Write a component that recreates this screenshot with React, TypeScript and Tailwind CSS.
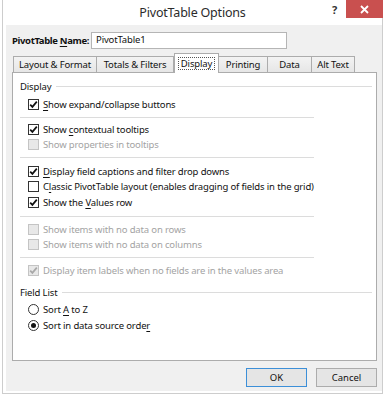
import type { ReactNode } from "react";

const font = { fontFamily: '"Noto Sans", "Open Sans", Arial, sans-serif' };

function Check({ checked, disabled }: { checked?: boolean; disabled?: boolean }) {
  return (
    <span
      className={`flex h-[11px] w-[11px] shrink-0 items-center justify-center border ${
        disabled ? "border-[#c4c4c4] bg-[#e8e8e8]" : "border-[#333] bg-white"
      }`}
    >
      {checked && (
        <svg width="9" height="9" viewBox="0 0 9 9">
          <path
            d="M1.2 4.6 L3.4 6.9 L7.8 1.6"
            fill="none"
            stroke={disabled ? "#a8a8a8" : "#111"}
            strokeWidth="1.7"
          />
        </svg>
      )}
    </span>
  );
}

function CheckRow({
  children,
  checked,
  disabled,
  className = "",
}: {
  children: ReactNode;
  checked?: boolean;
  disabled?: boolean;
  className?: string;
}) {
  return (
    <div className={`flex h-[15px] items-center gap-[4px] pl-[15px] ${className}`}>
      <Check checked={checked} disabled={disabled} />
      <span
        className={`whitespace-nowrap text-[9.5px] leading-none tracking-[-0.15px] ${
          disabled ? "text-[#a3a3a3]" : "text-[#111]"
        }`}
      >
        {children}
      </span>
    </div>
  );
}

function Radio({ checked, children, className = "" }: { checked?: boolean; children: ReactNode; className?: string }) {
  return (
    <div className={`flex h-[15px] items-center gap-[4px] pl-[15px] ${className}`}>
      <span className="flex h-[11px] w-[11px] shrink-0 items-center justify-center rounded-full border border-[#333] bg-white">
        {checked && <span className="h-[5px] w-[5px] rounded-full bg-[#111]" />}
      </span>
      <span className="whitespace-nowrap text-[9.5px] leading-none tracking-[-0.15px] text-[#111]">{children}</span>
    </div>
  );
}

function Sep({ className = "" }: { className?: string }) {
  return <div className={`ml-[7px] h-px w-[294px] bg-[#dcdcdc] ${className}`} />;
}

function Header({ label, className = "" }: { label: string; className?: string }) {
  return (
    <div className={`flex h-[15px] items-center gap-[5px] pl-[7px] pr-[4px] ${className}`}>
      <span className="whitespace-nowrap text-[9.5px] leading-none tracking-[-0.15px] text-[#111]">{label}</span>
      <div className="h-px flex-1 bg-[#dcdcdc]" />
    </div>
  );
}

const U = ({ children }: { children: ReactNode }) => <span className="underline underline-offset-2">{children}</span>;

const tabs = [
  { label: "Layout & Format", w: "w-[84px]" },
  { label: "Totals & Filters", w: "w-[78px]" },
  { label: "Display", w: "w-[45px]", active: true },
  { label: "Printing", w: "w-[50px]" },
  { label: "Data", w: "w-[45px]" },
  { label: "Alt Text", w: "w-[44px]" },
];

export default function App() {
  return (
    <div className="h-[400px] w-[388px] overflow-hidden bg-white" style={font}>
      <div className="relative ml-[2px] flex h-[394px] w-[381px] flex-col border-x border-b border-[#cdcdcd] bg-white">
        {/* Title bar */}
        <div className="flex h-[25px] shrink-0 items-center justify-center pt-[2px]">
          <span className="text-[12.5px] tracking-[-0.2px] text-[#2b2b2b]">PivotTable Options</span>
        </div>
        <span className="absolute left-[329px] top-[2px] text-[11px] font-bold text-[#333]">?</span>
        <div className="absolute right-[-1px] top-0 flex h-[18px] w-[37px] items-center justify-center bg-[#c9504f]">
          <svg width="9" height="9" viewBox="0 0 9 9">
            <path d="M1 1 L8 8 M8 1 L1 8" stroke="#fff" strokeWidth="1.8" />
          </svg>
        </div>

        {/* Client area */}
        <div className="mb-[2px] ml-[3px] flex flex-1 flex-col bg-[#f0f0f0] pl-[6px] pr-[3px] pt-[7px]">
          <div className="flex h-[17px] items-center gap-[2px]">
            <span className="shrink-0 whitespace-nowrap text-[9.5px] font-bold leading-none tracking-[-0.35px] text-[#111]">
              PivotTable <U>N</U>ame:
            </span>
            <div className="flex h-[17px] w-[196px] items-center border border-[#b5b5b5] bg-white pl-[4px] text-[9.5px] tracking-[-0.15px] text-[#111]">
              PivotTable1
            </div>
          </div>

          {/* Tabs */}
          <div className="mt-[4px] flex h-[19px] items-end pl-[2px]">
            {tabs.map((t) =>
              t.active ? (
                <div
                  key={t.label}
                  className={`relative z-10 -mb-px flex h-[20px] ${t.w} items-center justify-center border border-b-0 border-[#acacac] bg-white`}
                >
                  <span className="border border-dotted border-[#555] px-[2px] text-[9.5px] leading-[11px] tracking-[-0.15px] text-[#111]">
                    {t.label}
                  </span>
                </div>
              ) : (
                <div
                  key={t.label}
                  className={`-ml-px flex h-[16px] ${t.w} items-center justify-center whitespace-nowrap border border-b-0 border-[#acacac] bg-[linear-gradient(#f3f3f3,#e6e6e6)] text-[9.5px] leading-none tracking-[-0.15px] text-[#111]`}
                >
                  {t.label}
                </div>
              )
            )}
          </div>

          {/* Panel */}
          <div className="flex h-[289px] w-[365px] flex-col border border-[#acacac] bg-white pt-[6px]">
            <Header label="Display" />
            <CheckRow checked className="mt-[3px]">
              <U>S</U>how expand/collapse buttons
            </CheckRow>
            <Sep className="mt-[5px]" />
            <CheckRow checked className="mt-[4px]">
              Show <U>c</U>ontextual tooltips
            </CheckRow>
            <CheckRow disabled>Show properties in tooltips</CheckRow>
            <Sep className="mt-[5px]" />
            <CheckRow checked className="mt-[6px]">
              <U>D</U>isplay field captions and filter drop downs
            </CheckRow>
            <CheckRow>
              C<U>l</U>assic PivotTable layout (enables dragging of fields in the grid)
            </CheckRow>
            <CheckRow checked className="mt-[1px]">
              Show the <U>V</U>alues row
            </CheckRow>
            <Sep className="mt-[6px]" />
            <CheckRow disabled className="mt-[5px]">
              Show items with no data on rows
            </CheckRow>
            <CheckRow disabled>Show items with no data on columns</CheckRow>
            <Sep className="mt-[5px]" />
            <CheckRow disabled checked className="mt-[5px]">
              Display item labels when no fields are in the values area
            </CheckRow>
            <Header label="Field List" className="mt-[7px]" />
            <Radio className="mt-[2px]">
              Sort <U>A</U> to Z
            </Radio>
            <Radio checked className="mt-[1px]">
              Sort in data source orde<U>r</U>
            </Radio>
          </div>

          {/* Buttons */}
          <div className="mt-[7px] flex w-[365px] justify-end gap-[9px]">
            <button className="h-[19px] w-[61px] border border-[#3c8fd8] bg-[#e5e5e5] text-[9.5px] leading-none text-[#111]">
              OK
            </button>
            <button className="h-[19px] w-[61px] border border-[#acacac] bg-[#e5e5e5] text-[9.5px] leading-none text-[#111]">
              Cancel
            </button>
          </div>
        </div>
      </div>
    </div>
  );
}
